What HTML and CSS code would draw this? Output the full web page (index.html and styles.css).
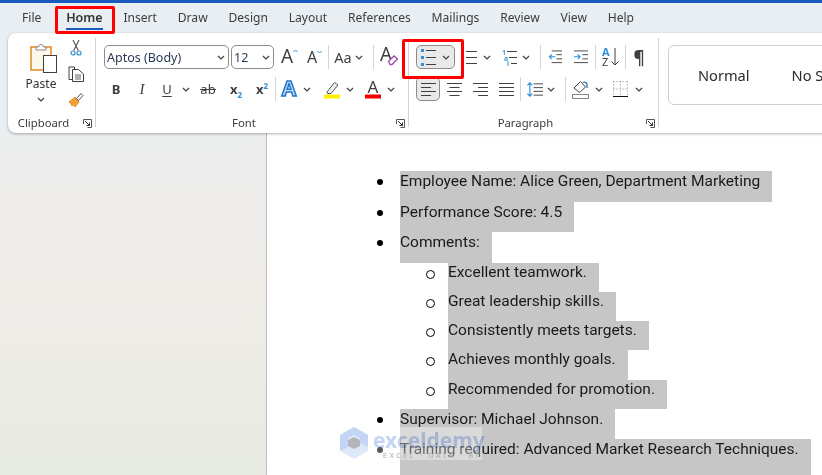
FILE: index.html
```html
<!DOCTYPE html>
<html lang="en">
<head>
<meta charset="utf-8">
<title>Word - Bulleted list</title>
<link rel="stylesheet" href="styles.css">
</head>
<body>
<svg class="defs" width="0" height="0" aria-hidden="true">
  <symbol id="chev" viewBox="0 0 8 5"><path d="M1 1 L4 4 L7 1" fill="none" stroke="#404040" stroke-width="1.2"/></symbol>
  <symbol id="launch" viewBox="0 0 9 9"><path d="M.5 5V.5H8.5V8.500H4.500" fill="none" stroke="#555" stroke-width="1"/><path d="M2 2 L6.500 6.500 M6.500 3.500V6.500H3.500" fill="none" stroke="#333" stroke-width="1"/></symbol>
</svg>
<div class="app">
  <div class="titlebar"></div>
  <nav class="tabs">
    <span class="tab">File</span>
    <span class="tab active">Home</span>
    <span class="tab">Insert</span>
    <span class="tab">Draw</span>
    <span class="tab">Design</span>
    <span class="tab">Layout</span>
    <span class="tab">References</span>
    <span class="tab">Mailings</span>
    <span class="tab">Review</span>
    <span class="tab">View</span>
    <span class="tab">Help</span>
  </nav>
  <section class="ribbon">
    <div class="group g-clip">
      <div class="body clip-body">
        <div class="paste">
          <svg class="paste-icon" width="27" height="31" viewBox="0 0 27 31">
            <rect x="1" y="5" width="20" height="23" fill="#fdf6ea" stroke="#e08a1e" stroke-width="1.500"/>
            <path d="M6 8V5H8.500A2.500 2.500 0 0 1 13.500 5H16V8Z" fill="#fff" stroke="#8a8a8a"/>
            <rect x="13.500" y="13.500" width="13" height="17" fill="#fff" stroke="#404040"/>
          </svg>
          <span class="paste-label">Paste</span>
          <svg class="chev" width="8" height="5"><use href="#chev"/></svg>
        </div>
        <div class="clip-tools">
          <svg width="16" height="16" viewBox="0 0 16 16">
            <path d="M5 0 L10.300 10.500 M11 0 L5.700 10.500" fill="none" stroke="#505050" stroke-width="1.100"/>
            <circle cx="5" cy="13" r="2" fill="none" stroke="#2f8fd6" stroke-width="1.200"/>
            <circle cx="11" cy="13" r="2" fill="none" stroke="#2f8fd6" stroke-width="1.200"/>
          </svg>
          <svg width="16" height="16" viewBox="0 0 16 16">
            <path d="M4.500 13.500H1V1H6.500V3" fill="none" stroke="#404040"/>
            <path d="M4.500 3.500H10.500L15.500 8V15.500H4.500Z" fill="#fff" stroke="#404040"/>
            <path d="M7 9H13M7 11H13M7 13H13" stroke="#404040" stroke-width=".8"/>
          </svg>
          <svg width="16" height="16" viewBox="0 0 16 16">
            <path d="M1 10 L7 5 L11 10 L7 15 L5.500 12.500 L4 14 L3 11.500Z" fill="#f0a030" stroke="#d97f1a" stroke-width=".8"/>
            <path d="M8.500 6.500 L13 1.500 L15 3.500 L10.500 8.500Z" fill="#fff" stroke="#555"/>
          </svg>
        </div>
      </div>
      <div class="label-row"><span class="label">Clipboard</span><svg class="launch" width="9" height="9"><use href="#launch"/></svg></div>
    </div>

    <div class="group g-font">
      <div class="body">
        <div class="row">
          <div class="combo c-font ml1"><span>Aptos (Body)</span><svg width="8" height="5"><use href="#chev"/></svg></div>
          <div class="combo c-size ml2"><span>12</span><svg width="8" height="5"><use href="#chev"/></svg></div>
          <div class="t w17 ml7"><svg class="tall" width="17" height="30" viewBox="0 -5 17 30"><text x="0" y="16" class="glyph g16">A</text><path d="M12.500 5 L14.500 3 L16.500 5" fill="none" stroke="#2f8fd6" stroke-width="1"/></svg></div>
          <div class="t w16 ml9"><svg class="tall" width="16" height="30" viewBox="0 -5 16 30"><text x="0" y="16" class="glyph g14">A</text><path d="M10.500 4 L12.500 6 L14.500 4" fill="none" stroke="#2f8fd6" stroke-width="1"/></svg></div>
          <div class="sep ml5"></div>
          <div class="t w16 ml6 aa">Aa</div>
          <div class="t w16"><svg width="8" height="5"><use href="#chev"/></svg></div>
          <div class="sep ml6"></div>
          <div class="t w18 ml6"><svg class="tall" width="18" height="30" viewBox="0 -4 18 30"><text x="0" y="15" class="glyph g16">A</text><path d="M8.500 15.500 L14 10 L17.500 13 L12 18.500 H10Z" fill="#fff" stroke="#a04ab0" stroke-width="1.300"/></svg></div>
        </div>
        <div class="row">
          <div class="t w26 fmt bold">B</div>
          <div class="t w26 fmt ital">I</div>
          <div class="t w24 fmt under">U</div>
          <div class="t w14"><svg width="8" height="5"><use href="#chev"/></svg></div>
          <div class="t w30 fmt strike">ab</div>
          <div class="t w26 fmt bold"><span>x<sub class="blue">2</sub></span></div>
          <div class="t w26 fmt bold"><span>x<sup class="blue">2</sup></span></div>
          <div class="sep"></div>
          <div class="t w26"><svg class="tall" width="18" height="30" viewBox="0 -6 18 30"><text x="9" y="16" text-anchor="middle" class="effect">A</text></svg></div>
          <div class="t w10"><svg width="8" height="5"><use href="#chev"/></svg></div>
          <div class="t w16 ml12"><svg width="16" height="20" viewBox="0 0 16 20"><path d="M3 13 L10.500 3.500 L14 6 L7 14.500 L3.500 14.500Z" fill="#eee" stroke="#555"/><rect y="15.500" width="16" height="4" fill="#ffee00"/></svg></div>
          <div class="t w16 ml2"><svg width="8" height="5"><use href="#chev"/></svg></div>
          <div class="t w16 ml7"><svg class="tall" width="16" height="30" viewBox="0 -5 16 30"><text x="8" y="14" text-anchor="middle" class="glyph g15">A</text><rect y="15.500" width="16" height="4" fill="#f00000"/></svg></div>
          <div class="t w16 ml2"><svg width="8" height="5"><use href="#chev"/></svg></div>
        </div>
      </div>
      <div class="label-row"><span class="label">Font</span><svg class="launch" width="9" height="9"><use href="#launch"/></svg></div>
    </div>

    <div class="group g-para">
      <div class="body">
        <div class="row">
          <div class="toggle bullets">
            <svg width="15" height="17" viewBox="0 0 15 17"><g fill="#2f8fd6"><rect x="0" y="0" width="3" height="3"/><rect x="0" y="7" width="3" height="3"/><rect x="0" y="14" width="3" height="3"/></g><path d="M5 1.500H15M5 8.500H15M5 15.500H15" stroke="#404040"/></svg>
            <svg width="8" height="5"><use href="#chev"/></svg>
          </div>
          <div class="t w12 ml10"><svg width="11" height="15" viewBox="0 0 11 15"><path d="M0 1.500H11M0 7.500H11M0 13.500H11" stroke="#404040"/></svg></div>
          <div class="t w16 ml2"><svg width="8" height="5"><use href="#chev"/></svg></div>
          <div class="t w15 ml7"><svg class="tall" width="15" height="27" viewBox="0 -5 15 27"><text x="0" y="5.500" class="mini">1</text><text x="2" y="11.500" class="mini">a</text><text x="5" y="17" class="mini">i</text><path d="M5 2.500H15M7 8.500H15M9 14.500H15" stroke="#404040"/></svg></div>
          <div class="t w16 ml1"><svg width="8" height="5"><use href="#chev"/></svg></div>
          <div class="sep ml6"></div>
          <div class="t w14 ml7"><svg width="15" height="14" viewBox="0 0 15 14"><path d="M4 .5H15M9 4.500H15M9 9H15M4 13H15" stroke="#404040"/><path d="M8 6.800H1.500M4 4.300L1.500 6.800L4 9.300" fill="none" stroke="#2f8fd6" stroke-width="1.200"/></svg></div>
          <div class="t w14 ml12"><svg width="15" height="14" viewBox="0 0 15 14"><path d="M0 .5H15M9 4.500H15M9 9H15M0 13H15" stroke="#404040"/><path d="M0 6.800H6.500M4 4.300L6.500 6.800L4 9.300" fill="none" stroke="#2f8fd6" stroke-width="1.200"/></svg></div>
          <div class="sep ml7"></div>
          <div class="t w16 ml6"><svg class="tall" width="17" height="30" viewBox="0 -5 17 30"><text x="0" y="9" class="sort blue-fill">A</text><text x="0" y="19" class="sort">Z</text><path d="M13 1V18M9.500 14.500L13 18L16.500 14.500" fill="none" stroke="#404040"/></svg></div>
          <div class="sep ml7"></div>
          <div class="t w14 ml6 pilcrow">¶</div>
        </div>
        <div class="row">
          <div class="toggle align-on">
            <svg width="15" height="13" viewBox="0 0 15 13"><path d="M0 .5H15M0 4.500H10M0 8.500H15M0 12.500H10" stroke="#404040"/></svg>
          </div>
          <div class="t w15 ml7"><svg width="15" height="13" viewBox="0 0 15 13"><path d="M0 .5H15M2.500 4.500H12.500M0 8.500H15M2.500 12.500H12.500" stroke="#404040"/></svg></div>
          <div class="t w15 ml11"><svg width="15" height="13" viewBox="0 0 15 13"><path d="M0 .5H15M5 4.500H15M0 8.500H15M5 12.500H15" stroke="#404040"/></svg></div>
          <div class="t w15 ml11"><svg width="15" height="13" viewBox="0 0 15 13"><path d="M0 .5H15M0 4.500H15M0 8.500H15M0 12.500H15" stroke="#404040"/></svg></div>
          <div class="sep ml6"></div>
          <div class="t w16 ml6"><svg width="17" height="15" viewBox="0 0 17 15"><path d="M7 1.500H17M7 5.500H17M7 9.500H17M7 13.500H17" stroke="#404040"/><path d="M3 .5V14.500M.5 3L3 .5L5.500 3M.5 12L3 14.500L5.500 12" fill="none" stroke="#2f8fd6" stroke-width="1.200"/></svg></div>
          <div class="t w16"><svg width="8" height="5"><use href="#chev"/></svg></div>
          <div class="sep ml6"></div>
          <div class="t w17 ml6"><svg width="17" height="19" viewBox="0 0 17 19"><path d="M2 8 L8.500 1.500 L13.500 7 L7.500 12.500Z" fill="#fff" stroke="#404040"/><path d="M11 2.500 A3 3 0 0 1 15 4 V8" fill="none" stroke="#2f6fb0" stroke-width="1.300"/><rect x=".5" y="14.500" width="16" height="4" fill="#fff" stroke="#888"/></svg></div>
          <div class="t w16 ml2"><svg width="8" height="5"><use href="#chev"/></svg></div>
          <div class="t w15 ml6"><svg width="15" height="16" viewBox="0 0 15 16"><path d="M.5 .5H15M.5 .5V15M14.500 .5V15M7.500 .5V15M.5 8H15" fill="none" stroke="#8a8a8a" stroke-dasharray="1 2"/><path d="M0 15.500H15" stroke="#111"/></svg></div>
          <div class="t w16 ml3"><svg width="8" height="5"><use href="#chev"/></svg></div>
        </div>
      </div>
      <div class="label-row"><span class="label">Paragraph</span><svg class="launch" width="9" height="9"><use href="#launch"/></svg></div>
    </div>

    <div class="styles">
      <span>Normal</span>
      <span>No Spacing</span>
    </div>
  </section>

  <main class="workspace">
    <aside class="side"></aside>
    <article class="doc">
      <ul class="list">
        <li><div class="line"><i class="dot"></i><span class="sel">Employee Name: Alice Green, Department Marketing</span></div></li>
        <li><div class="line"><i class="dot"></i><span class="sel">Performance Score: 4.5</span></div></li>
        <li><div class="line"><i class="dot"></i><span class="sel">Comments:</span></div>
          <ul class="sublist">
            <li><div class="line sub"><i class="ring"></i><span class="sel">Excellent teamwork.</span></div></li>
            <li><div class="line sub"><i class="ring"></i><span class="sel">Great leadership skills.</span></div></li>
            <li><div class="line sub"><i class="ring"></i><span class="sel">Consistently meets targets.</span></div></li>
            <li><div class="line sub"><i class="ring"></i><span class="sel">Achieves monthly goals.</span></div></li>
            <li><div class="line sub"><i class="ring"></i><span class="sel">Recommended for promotion.</span></div></li>
          </ul>
        </li>
        <li><div class="line"><i class="dot"></i><span class="sel">Supervisor: Michael Johnson.</span></div></li>
        <li><div class="line last"><i class="dot"></i><span class="sel">Training required: Advanced Market Research Techniques.</span></div></li>
      </ul>
      <div class="watermark">
        <svg class="wm-logo" width="28" height="32" viewBox="0 0 28 32"><path d="M14 0 L28 8 V24 L14 32 L0 24 V8Z" fill="#dfe8f9"/><path d="M14 0 L28 8 V20 L20 16 V11 L14 8 L8 11 V20 L0 24 V8Z" fill="#c3d4f4"/><path d="M8 13 L14 10 L20 13 V19 L14 22 L8 19Z" fill="#b4b4bd"/></svg>
        <div class="wm-text"><span class="wm-name">exceldemy</span><span class="wm-sub">EXCEL · DATA · BI</span></div>
      </div>
    </article>
  </main>

  <div class="callout callout-home"></div>
  <div class="callout callout-bullets"></div>
</div>
</body>
</html>
```
FILE: styles.css
```css
* { box-sizing: border-box; }
html, body { margin: 0; height: 475px; overflow: hidden; }
body { font-family: "Noto Sans", "Liberation Sans", sans-serif; color: #333; }
.defs { position: absolute; }
.app { position: relative; width: 822px; height: 475px; overflow: hidden; display: flex; flex-direction: column; background: #e8eef1; }
.titlebar { height: 3px; background: #185abd; flex: none; }

.tabs { height: 30px; flex: none; display: flex; gap: 20.800px; padding-left: 22px; font-size: 12.100px; line-height: 30px; color: #3c3c3c; }
.tab { position: relative; }
.tab.active { font-weight: 600; font-size: 12.500px; color: #333; margin-left: 4px; }
.tab.active::after { content: ""; position: absolute; left: 0; right: 0; bottom: 3px; height: 2px; background: #185abd; }

.ribbon { height: 100px; flex: none; margin-left: 8px; width: 830px; background: #fff; border-radius: 8px; display: flex; box-shadow: 0 1px 3px rgba(0,0,0,.3); position: relative; z-index: 1; }
.group { margin: 5px 0 6px; border-right: 1px solid #d4d4d4; display: flex; flex-direction: column; flex: none; }
.g-clip { width: 88px; }
.g-font { width: 313px; }
.g-para { width: 250px; }
.body { flex: 1; padding: 7px 0 0 7px; display: flex; flex-direction: column; gap: 8px; }
.label-row { height: 16px; display: flex; align-items: center; margin-bottom: -4px; }
.label { flex: 1; text-align: center; font-size: 11.300px; color: #3c3c3c; line-height: 16px; padding-right: 4px; }
.launch { flex: none; margin-right: 3px; }

.clip-body { flex-direction: row; padding: 2px 0 0; gap: 0; }
.paste { width: 66px; display: flex; flex-direction: column; align-items: center; padding-top: 2px; }
.paste svg { flex: none; }
.paste-icon { margin-left: 5px; }
.paste-label { font-size: 12px; line-height: 16px; margin-top: 3px; color: #333; width: 44px; text-align: center; }
.paste .chev { margin-top: 5px; }
.clip-tools { margin-left: -6px; width: 16px; display: flex; flex-direction: column; gap: 10px; }

.row { display: flex; height: 24px; align-items: center; }
.t { flex: none; height: 24px; display: flex; align-items: center; justify-content: center; }
.tall { flex: none; }
.w10 { width: 10px; } .w12 { width: 12px; } .w14 { width: 14px; } .w15 { width: 15px; } .w16 { width: 16px; }
.w17 { width: 17px; } .w18 { width: 18px; } .w24 { width: 24px; } .w26 { width: 26px; } .w30 { width: 30px; }
.ml1 { margin-left: 1px; } .ml2 { margin-left: 2px; } .ml3 { margin-left: 3px; } .ml5 { margin-left: 5px; }
.ml6 { margin-left: 6px; } .ml7 { margin-left: 7px; } .ml9 { margin-left: 9px; } .ml10 { margin-left: 10px; }
.ml11 { margin-left: 11px; } .ml12 { margin-left: 12px; }
.sep { flex: none; width: 1px; height: 24px; background: #d4d4d4; }

.combo { flex: none; height: 24px; border: 1px solid #8c8c8c; border-radius: 5px; display: flex; align-items: center; justify-content: space-between; padding: 0 3px 0 2px; font-size: 12.500px; color: #2b3a55; }
.c-font { width: 125px; }
.c-size { width: 43px; }

.glyph { font-family: "Noto Sans", sans-serif; fill: #404040; }
.g16 { font-size: 19px; }
.g15 { font-size: 17px; }
.g14 { font-size: 16px; }
.aa { font-size: 14.500px; color: #404040; }
.fmt { font-size: 13px; color: #404040; }
.bold { font-weight: 700; }
.ital { font-style: italic; font-family: "Liberation Serif", serif; font-size: 15px; }
.under { text-decoration: underline; text-underline-offset: 2px; }
.strike { position: relative; }
.strike::after { content: ""; position: absolute; left: 7px; width: 16px; top: 12px; height: 1px; background: #404040; }
.blue { color: #2f8fd6; font-size: 8px; }
.fmt sub, .fmt sup { line-height: 0; }
.effect { font-family: "Noto Sans", sans-serif; font-weight: 700; font-size: 21px; fill: #bcdcf7; stroke: #2374c8; stroke-width: 1.500px; }
.mini { font-family: "Noto Sans", sans-serif; font-weight: 600; font-size: 7px; fill: #2f8fd6; }
.sort { font-family: "Noto Sans", sans-serif; font-size: 11px; fill: #404040; }
.blue-fill { fill: #2f8fd6; font-weight: 700; }
.pilcrow { font-size: 17px; font-weight: 700; color: #404040; }

.toggle { flex: none; height: 24px; background: #e9e9e9; border: 1px solid #8c8c8c; border-radius: 5px; display: flex; align-items: center; }
.bullets { width: 39px; padding: 0 4px; justify-content: space-between; }
.align-on { width: 24px; justify-content: center; }

.styles { flex: none; margin: 12px 0 0 9px; height: 60px; width: 200px; border: 1px solid #d0d0d0; border-radius: 6px; display: flex; align-items: center; gap: 42px; padding-left: 29px; font-size: 14.600px; color: #2a2a2a; white-space: nowrap; }

.workspace { flex: 1; display: flex; min-height: 0; }
.side { width: 266px; flex: none; background: linear-gradient(180deg, #ecedee 0%, #efece8 45%, #e7eae3 100%); }
.doc { flex: 1; position: relative; background: #fff; border-left: 1px solid #bdbdbd; overflow: hidden; padding-top: 38px; font-family: "Roboto", sans-serif; font-size: 15.500px; color: #1a1a1a; }
.list, .sublist { list-style: none; margin: 0; padding: 0; }
.list { padding-left: 109px; }
.sublist { padding-left: 48px; }
.line { display: flex; height: 30.500px; align-items: stretch; white-space: nowrap; }
.line.sub { height: 29.300px; }
.line.last { height: 60px; }
.sel { background: #c6c6c6; padding-right: 12px; line-height: 21.500px; }
.sub .sel { line-height: 18px; }
.dot, .ring { flex: none; width: 24px; height: 22px; position: relative; }
.dot::before { content: ""; position: absolute; left: 1px; top: 8px; width: 6px; height: 6px; border-radius: 50%; background: #000; }
.ring::before { content: ""; position: absolute; left: 1.500px; top: 7px; width: 7px; height: 7px; border-radius: 50%; border: 1px solid #000; }

.watermark { position: absolute; left: 73px; top: 294px; width: 142px; height: 33px; display: flex; gap: 5px; background: rgba(255,255,255,.35); }
.wm-logo { flex: none; }
.wm-text { display: flex; flex-direction: column; }
.wm-name { font-family: "Noto Sans", sans-serif; font-weight: 700; font-size: 21px; line-height: 24px; margin-top: 1px; color: #c3d4f4; mix-blend-mode: multiply; }
.wm-sub { font-size: 7px; letter-spacing: 2.500px; color: #aaa; line-height: 8px; padding-left: 10px; white-space: nowrap; }

.callout { position: absolute; border: 3px solid #f00; border-radius: 2px; z-index: 2; }
.callout-home { left: 55px; top: 6px; width: 60px; height: 28px; }
.callout-bullets { left: 402px; top: 39px; width: 62px; height: 40px; }
```
